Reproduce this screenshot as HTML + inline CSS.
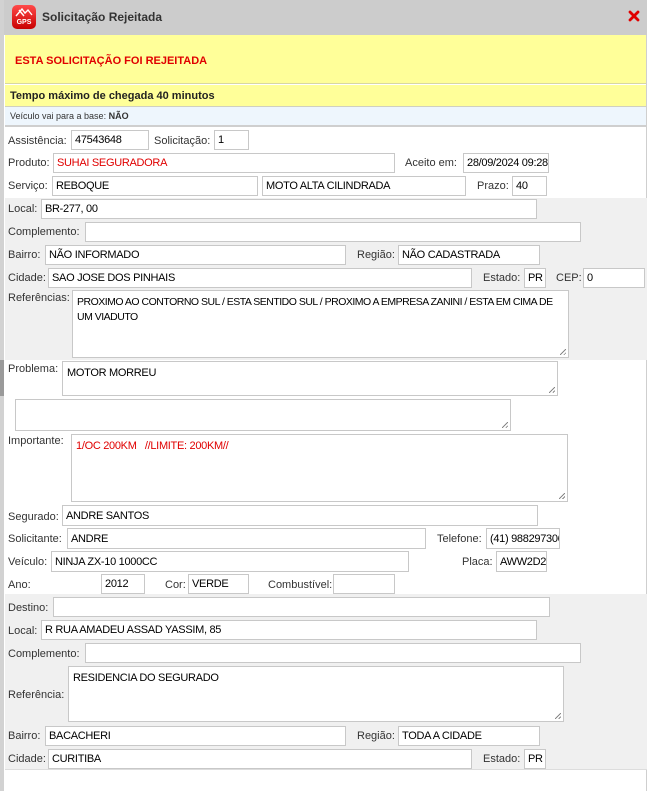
<!DOCTYPE html>
<html><head><meta charset="utf-8"><style>
*{box-sizing:border-box;margin:0;padding:0}
body{width:667px;height:791px;background:#fff;position:relative;overflow:hidden;font-family:"Liberation Sans",sans-serif;font-size:11px;color:#333}
.a{position:absolute}
.l{position:absolute;color:#333;font-size:11px;line-height:13px}
.i{position:absolute;background:#fff;border:1px solid #c8c8c8;color:#000;font-size:11px;letter-spacing:-0.3px;padding:0 3px;display:flex;align-items:center;white-space:nowrap;overflow:hidden}
.t{position:absolute;background:#fff;border:1px solid #c8c8c8;color:#000;font-size:11px;letter-spacing:-0.3px;padding:4px 4px;line-height:15px}
.t:after{content:"";position:absolute;right:2px;bottom:2px;width:6px;height:6px;background:linear-gradient(135deg,transparent 45%,#888 45%,#888 55%,transparent 55%,transparent 75%,#888 75%,#888 85%,transparent 85%)}
.g{position:absolute;left:5px;width:642px;background:#f0f0f0}
</style></head><body>
<div class="a" style="left:0;top:0;width:4px;height:791px;background:#d2d2d2"></div>
<div class="a" style="left:0;top:360px;width:4px;height:36px;background:#9a9a9a"></div>
<div class="a" style="left:646px;top:0;width:1px;height:791px;background:#cfcfcf"></div>
<div class="a" style="left:4px;top:0;width:643px;height:35px;background:#cccccc"></div>
<div class="a" style="left:12px;top:5px;width:24px;height:24px;border-radius:5px;background:linear-gradient(#ff4a4a,#c80000);color:#fff;font-size:7px;font-weight:bold;text-align:center;line-height:8px;padding-top:14px">GPS</div>
<svg class="a" style="left:14px;top:7px" width="20" height="11"><path d="M2 9 L8 2 L11 6 L14 3 L18 8 M5 3 L10 9" stroke="#fff" stroke-width="1.4" fill="none"/></svg>
<div class="a" style="left:42px;top:10px;font-size:12px;font-weight:bold;color:#333">Solicitação Rejeitada</div>
<svg class="a" style="left:628px;top:10px" width="12" height="12"><path d="M2 2 L10 10 M10 2 L2 10" stroke="#e00000" stroke-width="2.8" stroke-linecap="round"/></svg>
<div class="a" style="left:5px;top:35px;width:641px;height:49px;background:#ffff99;border-bottom:1px solid #d8d8a0"></div>
<div class="a" style="left:15px;top:55px;font-size:11px;font-weight:bold;color:#e00000">ESTA SOLICITAÇÃO FOI REJEITADA</div>
<div class="a" style="left:5px;top:85px;width:641px;height:22px;background:#ffff99;border-bottom:1px solid #d0d0c0"></div>
<div class="a" style="left:10px;top:90px;font-size:11px;font-weight:bold;color:#222">Tempo máximo de chegada 40 minutos</div>
<div class="a" style="left:5px;top:107px;width:641px;height:20px;background:#eef6fd;border-bottom:2px solid #cfcfcf"></div>
<div class="a" style="left:10px;top:111px;font-size:9px;color:#333">Veículo vai para a base: <b>NÃO</b></div>

<div class="g" style="top:198px;height:162px"></div>
<div class="g" style="top:594px;height:176px;border-bottom:1px solid #ddd"></div>

<div class="l" style="left:8px;top:135px">Assistência:</div><div class="i" style="left:71px;top:130px;width:78px;height:20px">47543648</div>
<div class="l" style="left:154px;top:135px">Solicitação:</div><div class="i" style="left:214px;top:130px;width:35px;height:20px">1</div>
<div class="l" style="left:8px;top:157px">Produto:</div><div class="i" style="left:53px;top:153px;width:342px;height:20px;color:#e00000">SUHAI SEGURADORA</div>
<div class="l" style="left:405px;top:157px">Aceito em:</div><div class="i" style="left:463px;top:153px;width:86px;height:20px">28/09/2024 09:28</div>
<div class="l" style="left:8px;top:180px">Serviço:</div><div class="i" style="left:52px;top:176px;width:206px;height:20px">REBOQUE</div>
<div class="i" style="left:262px;top:176px;width:204px;height:20px">MOTO ALTA CILINDRADA</div>
<div class="l" style="left:477px;top:180px">Prazo:</div><div class="i" style="left:512px;top:176px;width:35px;height:20px">40</div>

<div class="l" style="left:8px;top:203px">Local:</div><div class="i" style="left:41px;top:199px;width:496px;height:20px">BR-277, 00</div>
<div class="l" style="left:8px;top:226px">Complemento:</div><div class="i" style="left:85px;top:222px;width:496px;height:20px"></div>
<div class="l" style="left:8px;top:249px">Bairro:</div><div class="i" style="left:45px;top:245px;width:301px;height:20px">NÃO INFORMADO</div>
<div class="l" style="left:357px;top:249px">Região:</div><div class="i" style="left:398px;top:245px;width:142px;height:20px">NÃO CADASTRADA</div>
<div class="l" style="left:8px;top:272px">Cidade:</div><div class="i" style="left:48px;top:268px;width:424px;height:20px">SAO JOSE DOS PINHAIS</div>
<div class="l" style="left:483px;top:272px">Estado:</div><div class="i" style="left:524px;top:268px;width:22px;height:20px">PR</div>
<div class="l" style="left:556px;top:272px">CEP:</div><div class="i" style="left:583px;top:268px;width:62px;height:20px">0</div>
<div class="l" style="left:8px;top:292px">Referências:</div><div class="t" style="left:72px;top:290px;width:497px;height:68px;font-size:10.5px;letter-spacing:-0.5px;padding-right:2px">PROXIMO AO CONTORNO SUL / ESTA SENTIDO SUL / PROXIMO A EMPRESA ZANINI / ESTA EM CIMA DE UM VIADUTO</div>

<div class="l" style="left:8px;top:363px">Problema:</div><div class="t" style="left:62px;top:361px;width:496px;height:35px">MOTOR MORREU</div>
<div class="t" style="left:15px;top:399px;width:496px;height:32px"></div>
<div class="l" style="left:8px;top:435px">Importante:</div><div class="t" style="left:71px;top:434px;width:497px;height:68px;color:#e00000">1/OC 200KM &nbsp;&nbsp;//LIMITE: 200KM//</div>
<div class="l" style="left:8px;top:511px">Segurado:</div><div class="i" style="left:62px;top:505px;width:476px;height:21px">ANDRE SANTOS</div>
<div class="l" style="left:8px;top:533px">Solicitante:</div><div class="i" style="left:67px;top:528px;width:359px;height:21px">ANDRE</div>
<div class="l" style="left:437px;top:533px">Telefone:</div><div class="i" style="left:486px;top:528px;width:74px;height:21px">(41) 988297306</div>
<div class="l" style="left:8px;top:556px">Veículo:</div><div class="i" style="left:51px;top:551px;width:358px;height:21px">NINJA ZX-10 1000CC</div>
<div class="l" style="left:462px;top:556px">Placa:</div><div class="i" style="left:496px;top:551px;width:51px;height:21px">AWW2D22</div>
<div class="l" style="left:8px;top:579px">Ano:</div><div class="i" style="left:101px;top:574px;width:44px;height:20px">2012</div>
<div class="l" style="left:165px;top:579px">Cor:</div><div class="i" style="left:188px;top:574px;width:61px;height:20px">VERDE</div>
<div class="l" style="left:268px;top:579px">Combustível:</div><div class="i" style="left:333px;top:574px;width:62px;height:20px"></div>

<div class="l" style="left:8px;top:602px">Destino:</div><div class="i" style="left:53px;top:597px;width:497px;height:20px"></div>
<div class="l" style="left:8px;top:625px">Local:</div><div class="i" style="left:41px;top:620px;width:496px;height:20px">R RUA AMADEU ASSAD YASSIM, 85</div>
<div class="l" style="left:8px;top:648px">Complemento:</div><div class="i" style="left:85px;top:643px;width:496px;height:20px"></div>
<div class="l" style="left:8px;top:689px">Referência:</div><div class="t" style="left:68px;top:666px;width:496px;height:56px">RESIDENCIA DO SEGURADO</div>
<div class="l" style="left:8px;top:730px">Bairro:</div><div class="i" style="left:45px;top:726px;width:301px;height:20px">BACACHERI</div>
<div class="l" style="left:357px;top:730px">Região:</div><div class="i" style="left:398px;top:726px;width:142px;height:20px">TODA A CIDADE</div>
<div class="l" style="left:8px;top:753px">Cidade:</div><div class="i" style="left:48px;top:749px;width:424px;height:20px">CURITIBA</div>
<div class="l" style="left:483px;top:753px">Estado:</div><div class="i" style="left:524px;top:749px;width:22px;height:20px">PR</div>
</body></html>
